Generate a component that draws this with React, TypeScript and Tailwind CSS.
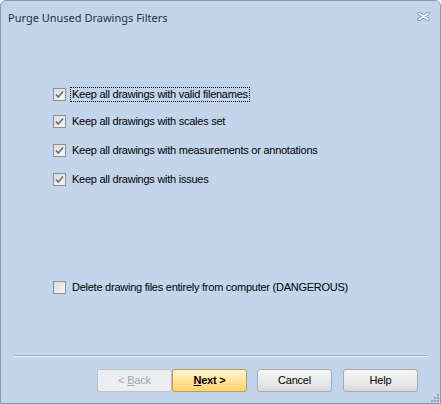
import React from "react";

const labelFont = { fontFamily: '"Liberation Sans", Arial, sans-serif' };

function CheckBox({ checked }: { checked: boolean }) {
  return (
    <div className="flex h-[13px] w-[13px] shrink-0 items-center justify-center border border-[#8e8f8f] bg-gradient-to-br from-[#dcdcdc] to-[#f7f7f7]">
      {checked && (
        <svg width="9" height="9" viewBox="0 0 9 9">
          <path d="M1 4.5 L3.3 7 L8 1.5" fill="none" stroke="#6d6d6d" strokeWidth="1.6" />
        </svg>
      )}
    </div>
  );
}

function Row({ label, checked, focused, className }: { label: string; checked: boolean; focused?: boolean; className?: string }) {
  return (
    <div className={`flex h-[13px] items-center ${className ?? ""}`}>
      <CheckBox checked={checked} />
      <span
        className={`ml-[5px] text-[11px] leading-[13px] tracking-[-0.25px] text-black ${focused ? "outline outline-1 outline-dotted outline-black px-[1px]" : "pl-[1px]"}`}
        style={labelFont}
      >
        {label}
      </span>
    </div>
  );
}

function Button({ children, variant }: { children: React.ReactNode; variant: "disabled" | "default" | "normal" }) {
  const styles = {
    disabled: "border-[#bac1ca] bg-[#eceef1] text-[#a3a6aa]",
    default: "border-[#c29b56] bg-gradient-to-b from-[#fff8d9] via-[#ffe49a] to-[#ffd46a] text-black font-bold",
    normal: "border-[#a4abb3] bg-gradient-to-b from-[#f6f6f6] via-[#ebebeb] to-[#dadada] text-black",
  }[variant];
  return (
    <button
      className={`flex h-[23px] w-[75px] items-center justify-center rounded-[3px] border text-[11px] tracking-[-0.2px] ${styles}`}
      style={labelFont}
    >
      {children}
    </button>
  );
}

export default function App() {
  return (
    <div className="relative flex h-[404px] w-[441px] flex-col rounded-t-[6px] border border-[#8c98a6] bg-[#c3d5eb]">
      {/* Title bar */}
      <div className="flex h-[34px] items-center justify-between pl-[7px] pr-[10px]">
        <span className="text-[11px] text-[#1f2f45]" style={{ fontFamily: '"Noto Sans", "Open Sans", sans-serif' }}>
          Purge Unused Drawings Filters
        </span>
        <svg width="13" height="9" viewBox="0 0 13 9" className="mb-[4px]">
          <path d="M2 1.5 L11 7.5 M11 1.5 L2 7.5" stroke="#8594a6" strokeWidth="3.6" strokeLinecap="round" />
          <path d="M2 1.5 L11 7.5 M11 1.5 L2 7.5" stroke="#f4f7fb" strokeWidth="1.6" strokeLinecap="round" />
        </svg>
      </div>

      {/* Options */}
      <div className="flex flex-col pl-[52px] pt-[53px]">
        <Row label="Keep all drawings with valid filenames" checked focused />
        <Row label="Keep all drawings with scales set" checked className="mt-[14px]" />
        <Row label="Keep all drawings with measurements or annotations" checked className="mt-[16px]" />
        <Row label="Keep all drawings with issues" checked className="mt-[16px]" />
        <Row label="Delete drawing files entirely from computer (DANGEROUS)" checked={false} className="mt-[95px]" />
      </div>

      <div className="flex-1" />

      {/* Separator */}
      <div className="ml-[13px] mr-[12px] border-t border-b border-t-[#a0abb9] border-b-[#eef3f9]" />

      {/* Buttons */}
      <div className="mt-[12px] flex justify-end pb-[11px] pr-[22px]">
        <Button variant="disabled">
          &lt;&nbsp;<span className="underline">B</span>ack
        </Button>
        <Button variant="default">
          <span className="underline">N</span>ext&nbsp;&gt;
        </Button>
        <div className="ml-[10px]">
          <Button variant="normal">Cancel</Button>
        </div>
        <div className="ml-[11px]">
          <Button variant="normal">Help</Button>
        </div>
      </div>

      {/* Resize grip */}
      <svg width="8" height="8" viewBox="0 0 8 8" className="absolute bottom-[1px] right-[1px]">
        {[
          [6, 0],
          [3, 3],
          [6, 3],
          [0, 6],
          [3, 6],
          [6, 6],
        ].map(([x, y], i) => (
          <rect key={i} x={x} y={y} width="2" height="2" fill="#93a3b7" />
        ))}
      </svg>
    </div>
  );
}
